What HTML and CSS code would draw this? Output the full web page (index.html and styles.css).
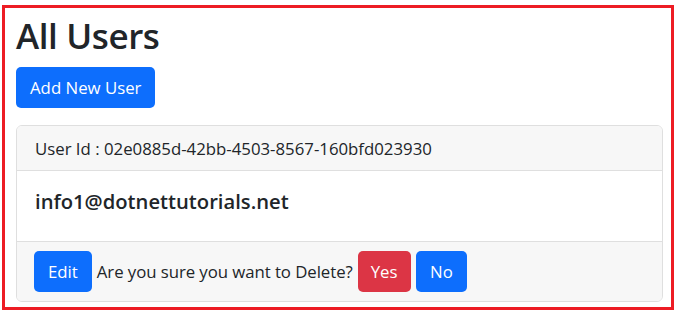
FILE: index.html
```html
<!DOCTYPE html>
<html lang="en">
<head>
<meta charset="utf-8">
<title>All Users</title>
<link rel="stylesheet" href="styles.css">
</head>
<body>
<div class="frame">
  <h1 class="title">All Users</h1>
  <a class="btn btn-primary add-btn" href="#">Add New User</a>
  <div class="card">
    <div class="card-header">User Id : 02e0885d-42bb-4503-8567-160bfd023930</div>
    <div class="card-body">
      <h5 class="card-title">info1@dotnettutorials.net</h5>
    </div>
    <div class="card-footer">
      <a class="btn btn-primary btn-wide" href="#">Edit</a>
      <span class="confirm-text">Are you sure you want to Delete?</span>
      <a class="btn btn-danger" href="#">Yes</a>
      <a class="btn btn-primary btn-no" href="#">No</a>
    </div>
  </div>
</div>
</body>
</html>
```
FILE: styles.css
```css
* { box-sizing: border-box; }
html, body { margin: 0; padding: 0; background: #fff; }
body {
  font-family: "Open Sans", "Noto Sans", sans-serif;
  font-size: 16.8px;
  color: #212529;
}
.frame {
  margin: 5px 0 0 2px;
  width: 672px;
  height: 305px;
  border: 3px solid #ed1c24;
  padding: 7px 7px 0 11px;
  display: flex;
  flex-direction: column;
  align-items: flex-start;
}
.title {
  margin: 0;
  font-size: 35px;
  line-height: 42px;
  font-weight: 600;
  letter-spacing: -0.4px;
}
.btn {
  display: inline-flex;
  align-items: center;
  justify-content: center;
  height: 41px;
  padding: 0 13px;
  border-radius: 5px;
  color: #fff;
  text-decoration: none;
  font-size: 16.8px;
  line-height: 26px;
}
.btn-wide { padding: 0 14px; }
.btn-no { padding: 0 14.5px; }
.btn-primary { background: #0d6efd; }
.btn-danger { background: #dc3545; }
.add-btn { margin-top: 10px; height: 41px; padding: 0 14px; }
.card {
  margin-top: 17px;
  width: 647px;
  border: 1px solid #dfdfdf;
  border-radius: 6px;
  overflow: hidden;
}
.card-header {
  background: #f7f7f7;
  border-bottom: 1px solid #dfdfdf;
  padding: 9px 18px 8px;
  line-height: 27px;
}
.card-body {
  padding: 17px 18px;
}
.card-title {
  margin: 0 0 9px;
  font-size: 20.2px;
  line-height: 27px;
  font-weight: 600;
}
.card-footer {
  background: #f7f7f7;
  border-top: 1px solid #dfdfdf;
  padding: 9px 17px;
  display: flex;
  align-items: center;
  gap: 5px;
}
.confirm-text { line-height: 26px; letter-spacing: -0.06px; }
```
